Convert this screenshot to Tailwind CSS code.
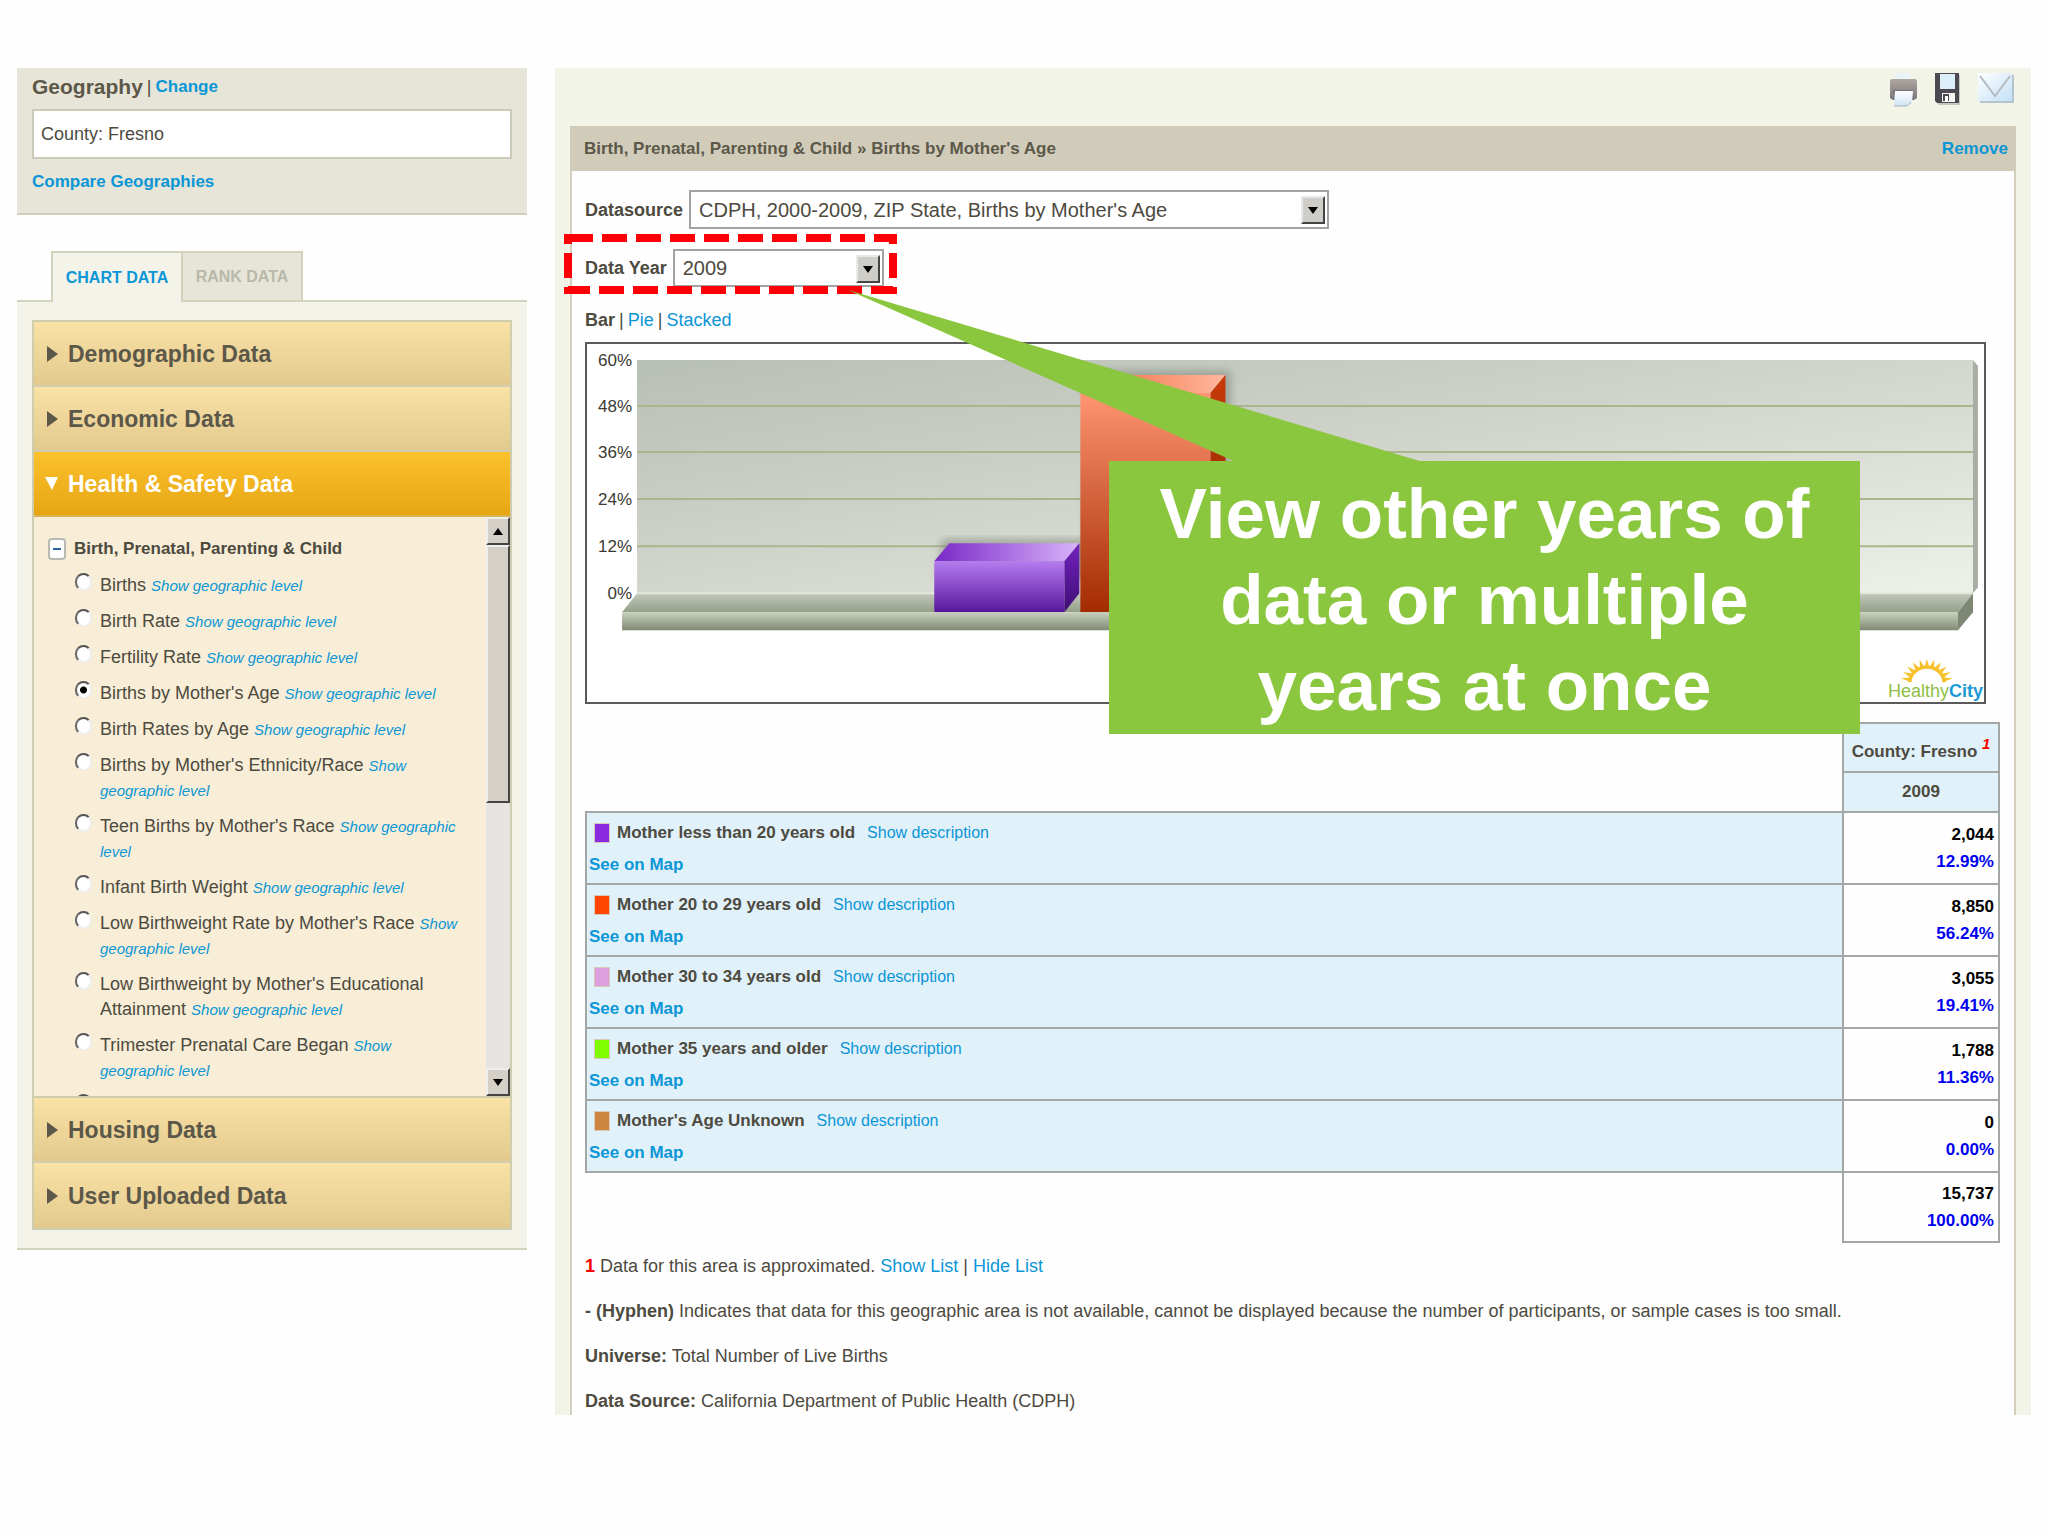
<!DOCTYPE html>
<html lang="en">
<head>
  <meta charset="UTF-8" />
  <meta name="viewport" content="width=device-width, initial-scale=1.0"/>
  <title>HealthyCity - Births by Mother's Age</title>
  <script src="https://cdn.jsdelivr.net/npm/@tailwindcss/browser@4"></script>
</head>
<body class="min-h-screen bg-[#fefefe] font-['Liberation_Sans',Arial,sans-serif] text-[18px] leading-7 text-[#4d4a40]">
  <div class="flex items-start gap-7 px-[17px] pt-[68px] pb-16">

    <!-- Sidebar -->
    <aside class="w-[510px] shrink-0">
      <section class="border-b-2 border-[#cfcfc0] bg-[#e7e5d8] px-[15px] pt-[5px] pb-[17px]">
        <div class="flex items-center gap-1">
          <label for="geography" class="text-[21px] font-bold text-[#5c5849]">Geography</label>
          <span>|</span>
          <a href="#" class="text-[17px] font-bold text-[#0b96d6]">Change</a>
        </div>
        <input id="geography" type="text" value="County: Fresno" readonly class="mt-2 mb-2 block h-[50px] w-full border-2 border-[#cbc9b8] bg-white px-[7px]" />
        <a href="#" class="text-[17px] font-bold text-[#0b96d6]">Compare Geographies</a>
      </section>

      <div class="mt-9 flex pl-[34px] text-base font-bold">
        <button class="relative z-10 -mb-0.5 h-[51px] w-[132px] border-2 border-b-0 border-[#d3d2bd] bg-[#f4f3ea] text-[#0b96d6]">CHART DATA</button>
        <button class="h-[49px] w-[120px] border-2 border-b-0 border-l-0 border-[#d3d2bd] bg-[#e6e5d8] text-[#b9b8a9]">RANK DATA</button>
      </div>

      <section class="border-y-2 border-[#d3d2bd] bg-[#f4f3ea] px-[15px] pt-[18px] pb-[18px]">
        <div id="accordion" class="border-2 border-[#cfcdb0]"></div>
      </section>
    </aside>

    <!-- Main panel -->
    <main class="min-w-0 flex-1 bg-[#f3f4e8] px-[15px]">
      <div class="flex h-[58px] items-start justify-end gap-4 pt-1">
        <button aria-label="Print">
          <svg class="h-9 w-[30px]" viewBox="0 0 30 36">
            <defs>
              <linearGradient id="printer" x1="0" y1="0" x2="0" y2="1"><stop offset="0" stop-color="#b0a6a0"/><stop offset="1" stop-color="#77757a"/></linearGradient>
              <linearGradient id="paper" x1="0" y1="0" x2="0" y2="1"><stop offset="0" stop-color="#fff"/><stop offset="1" stop-color="#cfe3f3"/></linearGradient>
            </defs>
            <path d="M6 8 8 1h13l3 7z" fill="#e9f3f8"/>
            <path d="M2 9q0-2 2-2h23q2 0 2 2v17l-3 2H5l-3-2z" fill="url(#printer)"/>
            <path d="M5 18h20v4H5z" fill="#77777b"/>
            <path d="M7 19h18l-1 11-4 4H6z" fill="url(#paper)"/>
            <path d="M6 34h13l4-4" fill="none" stroke="#aab3ba"/>
          </svg>
        </button>
        <button aria-label="Save">
          <svg class="h-9 w-[28px]" viewBox="0 0 28 36">
            <path d="M3 3h23v30H5l-2-2z" fill="#9a9a9a" opacity=".5"/>
            <path d="M1 1h24v30H3l-2-2z" fill="#4c4a50"/>
            <path d="M6 2h15v15H6z" fill="#dceefa"/>
            <path d="M8 21h13v9H8z" fill="#f5f5f3"/>
            <path d="M9 22h6v7H9z" fill="#4c4a50"/><path d="M11 24h3v5h-3z" fill="#fff"/>
          </svg>
        </button>
        <button aria-label="Email" class="mr-0.5">
          <svg class="h-9 w-[36px]" viewBox="0 0 36 36">
            <defs><linearGradient id="mail" x1="0" y1="0" x2="1" y2="1"><stop offset="0" stop-color="#fff"/><stop offset="1" stop-color="#c3e0f6"/></linearGradient></defs>
            <path d="M2 3h34v28H2z" fill="#b5c3cc"/>
            <path d="M0 1h34v28H0z" fill="url(#mail)"/>
            <path d="M2 4 17 24 32 4" fill="none" stroke="#b4bcc2" stroke-width="2"/>
          </svg>
        </button>
      </div>

      <div class="relative border-x-2 border-[#d3cfba] bg-[#fefefe]">
        <div class="-mx-0.5 flex h-[45px] items-center justify-between bg-[#d1ccb9] pr-2 pl-3.5 text-[17px] font-bold">
          <h1 class="text-[#5c5849]">Birth, Prenatal, Parenting &amp; Child » Births by Mother's Age</h1>
          <a href="#" class="text-[#0b96d6]">Remove</a>
        </div>

        <div class="pr-3.5 pl-[13px]">
          <div class="mt-[19px] flex items-center gap-1.5">
            <label for="datasource" class="font-bold">Datasource</label>
            <span class="relative">
              <select id="datasource" class="h-[39px] w-[640px] appearance-none border-2 border-[#a3a3a3] bg-white pl-2 text-[20px]">
                <option>CDPH, 2000-2009, ZIP State, Births by Mother's Age</option>
              </select>
              <span class="pointer-events-none absolute top-1.5 right-1 flex h-7 w-6 items-center justify-center border-2 border-t-[#e8e8e8] border-r-[#444] border-b-[#444] border-l-[#e8e8e8] bg-[#cfcdc8]">
                <svg class="h-2 w-3" viewBox="0 0 12 8"><path d="M1 1h10L6 8z"/></svg>
              </span>
            </span>
          </div>

          <div class="mt-5 flex items-center gap-1.5">
            <label for="year" class="font-bold">Data Year</label>
            <span class="relative">
              <select id="year" class="h-[38px] w-[211px] appearance-none border-2 border-[#a3a3a3] bg-white pl-2 text-[20px]">
                <option>2009</option>
              </select>
              <span class="pointer-events-none absolute top-1.5 right-1 flex h-7 w-6 items-center justify-center border-2 border-t-[#e8e8e8] border-r-[#444] border-b-[#444] border-l-[#e8e8e8] bg-[#cfcdc8]">
                <svg class="h-2 w-3" viewBox="0 0 12 8"><path d="M1 1h10L6 8z"/></svg>
              </span>
            </span>
          </div>

          <nav class="mt-[19px] mb-2 flex gap-1">
            <span class="font-bold">Bar</span>|<a href="#" class="text-[#0b96d6]">Pie</a>|<a href="#" class="text-[#0b96d6]">Stacked</a>
          </nav>

          <!-- Chart -->
          <div class="mr-3.5 border-2 border-[#5a5a5a] bg-white">
            <svg id="chart" class="block w-full" viewBox="588 344 1396 358" role="img" aria-label="Births by mother's age, Fresno County"></svg>
          </div>

          <!-- Data table -->
          <table class="mt-[18px] w-full table-fixed border-collapse text-[17px] font-bold">
            <colgroup><col><col class="w-[156px]"></colgroup>
            <thead class="text-center">
              <tr class="h-[49px]">
                <td rowspan="2"></td>
                <th class="border-2 border-[#a3a7a6] bg-[#e1f1fa] px-0 pt-2 whitespace-nowrap">County: Fresno <sup class="text-[15px] text-[#f00] italic">1</sup></th>
              </tr>
              <tr class="h-10">
                <th class="border-2 border-[#a3a7a6] bg-[#e1f1fa]">2009</th>
              </tr>
            </thead>
            <tbody id="rows"></tbody>
          </table>

          <div class="mt-[9px] space-y-[17px]">
            <p><b class="text-[#f00]">1</b> Data for this area is approximated. <a href="#" class="text-[#0b96d6]">Show List</a> | <a href="#" class="text-[#0b96d6]">Hide List</a></p>
            <p><b>- (Hyphen)</b> Indicates that data for this geographic area is not available, cannot be displayed because the number of participants, or sample cases is too small.</p>
            <p><b>Universe:</b> Total Number of Live Births</p>
            <p><b>Data Source:</b> California Department of Public Health (CDPH)</p>
          </div>
        </div>

        <!-- Callout over the year picker and chart -->
        <svg class="pointer-events-none absolute top-[105px] -left-2 h-[240px] w-[870px]" viewBox="564 231 870 240">
          <rect x="568" y="238" width="325" height="52" fill="none" stroke="#fb0007" stroke-width="8" stroke-dasharray="25 9"/>
          <path d="M848 290 1423 462H1236z" fill="#8bc63f"/>
        </svg>
        <p class="absolute top-[335px] left-[537px] w-[751px] bg-[#8bc63f] px-10 pt-2.5 pb-[5px] text-center text-[71px] leading-[86px] font-bold text-white">View other years of data or multiple years at once</p>
      </div>
    </main>
  </div>

  <script>
    const indicators = [
      'Births',
      'Birth Rate',
      'Fertility Rate',
      "Births by Mother's Age",
      'Birth Rates by Age',
      "Births by Mother's Ethnicity/Race",
      "Teen Births by Mother's Race",
      'Infant Birth Weight',
      "Low Birthweight Rate by Mother's Race",
      "Low Birthweight by Mother's Educational Attainment",
      'Trimester Prenatal Care Began',
    ];

    const rows = [
      { color: '#8a2be2', name: 'Mother less than 20 years old', count: '2,044', pct: '12.99%' },
      { color: '#ff4500', name: 'Mother 20 to 29 years old', count: '8,850', pct: '56.24%' },
      { color: '#dda0dd', name: 'Mother 30 to 34 years old', count: '3,055', pct: '19.41%' },
      { color: '#7fff00', name: 'Mother 35 years and older', count: '1,788', pct: '11.36%' },
      { color: '#cd853f', name: "Mother's Age Unknown", count: '0', pct: '0.00%' },
    ];

    // Accordion
    function sectionHeader(title, open) {
      return open ? `
        <button class="flex h-[65px] w-full items-center gap-2 border-b-2 border-[#d9b455] bg-linear-to-b from-[#fcc12b] to-[#e6a612] pl-2.5 text-[23px] font-bold text-white">
          <svg class="h-4 w-4" viewBox="0 0 16 16" fill="currentColor"><path d="M1 1h13L8 14z"/></svg>${title}
        </button>` : `
        <button class="flex h-[65px] w-full items-center gap-2 border-b-2 border-[#cfcdb0] bg-linear-to-b from-[#f9e2a6] to-[#e3c98e] pl-2.5 text-[23px] font-bold text-[#5c5849] last:border-b-0">
          <svg class="h-4 w-4" viewBox="0 0 16 16" fill="currentColor"><path d="M3 0v16l11-8z"/></svg>${title}
        </button>`;
    }

    function radio(i) {
      return `<input id="ind${i}" type="radio" name="indicator" aria-label="${indicators[i] || 'More'}" ${i === 3 ? 'checked' : ''} class="h-[18px] w-[17px] shrink-0 appearance-none rounded-full border-2 border-t-[#555] border-r-[#eee] border-b-[#eee] border-l-[#666] bg-white checked:bg-[radial-gradient(circle,#000_3px,#fff_4px)]" />`;
    }

    function indicatorList() {
      return `
        <div class="flex h-[581px] overflow-hidden border-b-2 border-[#cfcdb0] bg-[#f8eed7]">
          <div class="flex-1 pt-[18px] pr-5 pl-3.5">
            <div class="flex items-center gap-2 text-[17px] font-bold">
              <button aria-label="Collapse" class="flex h-[22px] w-[18px] items-center justify-center rounded border-2 border-[#b9b9b4] bg-white"><span class="h-0.5 w-2 bg-[#2c5f9e]"></span></button>
              Birth, Prenatal, Parenting &amp; Child
            </div>
            <ul class="mt-2.5 space-y-[11px] pl-[27px] leading-[25px]">
              ${indicators.map((name, i) => `
                <li class="flex items-start gap-2">
                  ${radio(i)}
                  <span><label for="ind${i}">${name}</label> <a href="#" class="text-[15px] leading-none text-[#0b96d6] italic">Show geographic level</a></span>
                </li>`).join('')}
              <li class="flex">${radio(indicators.length)}</li>
            </ul>
          </div>
          <div class="flex w-6 shrink-0 flex-col bg-[#e6e4e0]">
            <button aria-label="Scroll up" class="flex h-7 items-center justify-center border-2 border-t-[#eee] border-r-[#444] border-b-[#444] border-l-[#eee] bg-[#d4d0c8]"><svg class="h-2 w-3" viewBox="0 0 12 8"><path d="M1 8h10L6 1z"/></svg></button>
            <div class="h-[258px] border-2 border-t-[#eee] border-r-[#444] border-b-[#444] border-l-[#eee] bg-[#d4d0c8]"></div>
            <button aria-label="Scroll down" class="mt-auto flex h-7 items-center justify-center border-2 border-t-[#eee] border-r-[#444] border-b-[#444] border-l-[#eee] bg-[#d4d0c8]"><svg class="h-2 w-3" viewBox="0 0 12 8"><path d="M1 1h10L6 8z"/></svg></button>
          </div>
        </div>`;
    }

    document.getElementById('accordion').innerHTML =
      sectionHeader('Demographic Data') +
      sectionHeader('Economic Data') +
      sectionHeader('Health &amp; Safety Data', true) +
      indicatorList() +
      sectionHeader('Housing Data') +
      sectionHeader('User Uploaded Data');

    // Table rows
    document.getElementById('rows').innerHTML = rows.map(r => `
      <tr class="h-[72px]">
        <td class="border-2 border-[#a3a7a6] bg-[#e1f1fa] px-0.5 pt-0.5 leading-8">
          <div class="flex items-center pl-[5px]">
            <span class="mr-[7px] h-5 w-4 border border-[#d8c8b8]" style="background-color: ${r.color}"></span>
            ${r.name}
            <a href="#" class="ml-3 text-base leading-7 font-normal text-[#0b96d6]">Show description</a>
          </div>
          <a href="#" class="block text-[#0b96d6]">See on Map</a>
        </td>
        <td class="border-2 border-[#a3a7a6] px-1 text-right leading-[27px] text-black">${r.count}<br><span class="text-[#0000f0]">${r.pct}</span></td>
      </tr>`).join('') + `
      <tr class="h-[70px]">
        <td></td>
        <td class="border-2 border-[#a3a7a6] px-1 text-right leading-[27px] text-black">15,737<br><span class="text-[#0000f0]">100.00%</span></td>
      </tr>`;

    // Chart
    const ticks = [['60%', 360], ['48%', 406], ['36%', 452], ['24%', 499], ['12%', 546], ['0%', 593]];

    function bar(x, top, id) {
      return `
        <path d="M${x + 8} ${top - 22}h142v${600 - top}h-146z" fill="#6d7468" opacity=".5" filter="url(#soft)"/>
        <path d="M${x} ${top}l15-18h130l-15 18z" fill="url(#${id}Top)"/>
        <path d="M${x + 130} ${top}l15-18v${611 - top}l-15 19z" fill="url(#${id}Side)"/>
        <path d="M${x} ${top}h130v${612 - top}h-130z" fill="url(#${id}Front)"/>`;
    }

    function gradient(id, from, to, dir) {
      return `<linearGradient id="${id}" x1="0" y1="0" ${dir || 'x2="0" y2="1"'}><stop offset="0" stop-color="${from}"/><stop offset="1" stop-color="${to}"/></linearGradient>`;
    }

    const sun = Array.from({ length: 11 }, (_, i) =>
      `<path d="M-3-20 0-31 3-20z" transform="rotate(${-80 + i * 16})"/>`).join('');

    document.getElementById('chart').innerHTML = `
      <defs>
        <filter id="soft"><feGaussianBlur stdDeviation="4"/></filter>
        <linearGradient id="wall" x1="0" y1="0" x2="1" y2="1"><stop offset="0" stop-color="#b8bfb5"/><stop offset=".5" stop-color="#d2d6cd"/><stop offset="1" stop-color="#edf1ea"/></linearGradient>
        ${gradient('floor', '#c3c8bb', '#94a088')}
        ${gradient('edge', '#c9d1be', '#7f8a73')}
        ${gradient('purpleFront', '#b57cf0', '#56189a')}
        ${gradient('purpleTop', '#7a28c8', '#d8b4fa', 'x2="1" y2="0"')}
        ${gradient('purpleSide', '#7322bf', '#3f0f74')}
        ${gradient('orangeFront', '#ff9572', '#a32b00')}
        ${gradient('orangeTop', '#f06a3c', '#ffb79e', 'x2="1" y2="0"')}
        ${gradient('orangeSide', '#c93a08', '#7c2000')}
      </defs>
      <path d="M638 360h1335v233H638z" fill="url(#wall)"/>
      <path d="M1973 360l5 6v221l-5 6z" fill="#a9aea4"/>
      ${ticks.slice(1, 5).map(t => `<path d="M638 ${t[1]}h1335" stroke="#aab48d" stroke-width="2"/>`).join('')}
      <path d="M638 593h1335l-15 19H623z" fill="url(#floor)"/>
      <path d="M638 593h1335" stroke="#e4e8dc" stroke-width="2"/>
      ${bar(935, 561, 'purple')}
      ${bar(1081, 393, 'orange')}
      <path d="M623 612h1335v18H623z" fill="url(#edge)"/>
      <path d="M1973 593v19l-15 18v-18z" fill="#7d8773"/>
      <g font-family="Liberation Sans, sans-serif" font-size="17" fill="#3c3a33" text-anchor="end">
        ${ticks.map(t => `<text x="633" y="${t[1] + 6}">${t[0]}</text>`).join('')}
      </g>
      <g transform="translate(1927 682) scale(.85 .75)" fill="#f6c12c">
        <path d="M-20 0a20 20 0 0 1 40 0" fill="none" stroke="#f6c12c" stroke-width="4"/>
        ${sun}
      </g>
      <text x="1983" y="697" text-anchor="end" font-family="Liberation Sans, sans-serif" font-size="18" fill="#8fbf45">Healthy<tspan fill="#1a9ad7" font-weight="bold">City</tspan></text>`;
  </script>
</body>
</html>
